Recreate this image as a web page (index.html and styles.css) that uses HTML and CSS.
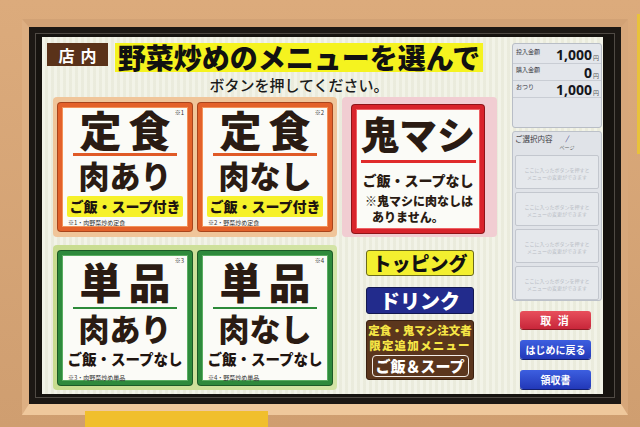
FILE: index.html
```html
<!DOCTYPE html>
<html lang="ja">
<head>
<meta charset="utf-8">
<title>券売機</title>
<link rel="stylesheet" href="styles.css">
</head>
<body>
<div class="wall">
  <div class="frame">
    <div class="bezel">
      <div class="bezel-in">
        <div class="screen">
          <div class="main">
            <div class="header">
              <div class="tag">店内</div>
              <div class="title">野菜炒めのメニューを選んで</div>
            </div>
            <div class="subtitle">ボタンを押してください。</div>
            <div class="grid">
              <div class="group g-orange">
                <div class="card c-orange">
                  <span class="note">※1</span>
                  <div class="big"><span>定</span><span>食</span></div>
                  <div class="rule"></div>
                  <div class="mid">肉あり</div>
                  <div class="sub hl">ご飯・スープ付き</div>
                  <div class="tiny">※1・肉野菜炒め定食</div>
                </div>
                <div class="card c-orange">
                  <span class="note">※2</span>
                  <div class="big"><span>定</span><span>食</span></div>
                  <div class="rule"></div>
                  <div class="mid">肉なし</div>
                  <div class="sub hl">ご飯・スープ付き</div>
                  <div class="tiny">※2・野菜炒め定食</div>
                </div>
              </div>
              <div class="group g-pink">
                <div class="card c-red">
                  <div class="oni">鬼マシ</div>
                  <div class="rule"></div>
                  <div class="oni-sub">ご飯・スープなし</div>
                  <div class="oni-note">※鬼マシに肉なしは</div>
                  <div class="oni-note second">ありません。</div>
                </div>
              </div>
              <div class="group g-green">
                <div class="card c-green">
                  <span class="note">※3</span>
                  <div class="big"><span>単</span><span>品</span></div>
                  <div class="rule"></div>
                  <div class="mid">肉あり</div>
                  <div class="sub">ご飯・スープなし</div>
                  <div class="tiny">※3・肉野菜炒め単品</div>
                </div>
                <div class="card c-green">
                  <span class="note">※4</span>
                  <div class="big"><span>単</span><span>品</span></div>
                  <div class="rule"></div>
                  <div class="mid">肉なし</div>
                  <div class="sub">ご飯・スープなし</div>
                  <div class="tiny">※4・野菜炒め単品</div>
                </div>
              </div>
              <div class="g-btns">
                <div class="btn-topping">トッピング</div>
                <div class="btn-drink">ドリンク</div>
                <div class="btn-extra">
                  <div class="extra-line">定食・鬼マシ注文者</div>
                  <div class="extra-line wide">限定追加メニュー</div>
                  <div class="extra-btn">ご飯＆スープ</div>
                </div>
              </div>
            </div>
          </div>
          <div class="side">
            <div class="amounts">
              <div class="arow"><span class="alabel">投入金額</span><span class="aval">1,000<small>円</small></span></div>
              <div class="arow"><span class="alabel">購入金額</span><span class="aval">0<small>円</small></span></div>
              <div class="arow"><span class="alabel">おつり</span><span class="aval">1,000<small>円</small></span></div>
            </div>
            <div class="select">
              <div class="select-head">
                <span class="select-title">ご選択内容</span>
                <span class="pager"><span class="slash">/</span><span class="page">ページ</span></span>
              </div>
              <div class="slots">
                <div class="slot">ここに入ったボタンを押すと<br>メニューの変更ができます</div>
                <div class="slot">ここに入ったボタンを押すと<br>メニューの変更ができます</div>
                <div class="slot">ここに入ったボタンを押すと<br>メニューの変更ができます</div>
                <div class="slot">ここに入ったボタンを押すと<br>メニューの変更ができます</div>
              </div>
            </div>
            <div class="sbtn red">取 消</div>
            <div class="sbtn blue">はじめに戻る</div>
            <div class="sbtn blue">領収書</div>
          </div>
        </div>
      </div>
    </div>
  </div>
  <div class="paper"></div>
  <div class="edge"></div>
</div>
</body>
</html>
```

FILE: styles.css
```css
html, body {
  margin: 0;
  padding: 0;
}
body {
  width: 640px;
  height: 427px;
  overflow: hidden;
  font-family: "Noto Sans CJK JP", "Noto Sans", sans-serif;
}
.wall {
  position: relative;
  width: 640px;
  height: 427px;
  box-sizing: border-box;
  padding: 19px 12px 12px 22px;
  background: linear-gradient(#dcab7c, #cf9e70);
}
.frame {
  border-style: solid;
  border-width: 8px 7px 11px 7px;
  border-color: #d2a275 #d7a77a #efc89c #ddaf82;
}
.bezel {
  background: #1c1814;
  padding: 6px;
}
.bezel-in {
  border: 1px solid #4f4a44;
  padding: 3px 11px 3px 6px;
  background: #16130f;
}
.screen {
  width: 561px;
  height: 357px;
  display: flex;
  overflow: hidden;
  background-color: #eeefe0;
  background-image: repeating-linear-gradient(90deg, rgba(255,255,255,0.25) 0 3px, rgba(0,0,0,0.015) 3px 6px);
}

/* main area */
.main {
  width: 455px;
  padding: 6px 0 0 5px;
  box-sizing: border-box;
}
.header {
  display: flex;
  gap: 7px;
  align-items: flex-start;
  height: 29px;
}
.tag {
  width: 61px;
  height: 23px;
  box-sizing: border-box;
  padding-left: 6px;
  background: #5a3219;
  color: #fff;
  font-size: 16px;
  font-weight: 700;
  letter-spacing: 6px;
  display: flex;
  align-items: center;
  justify-content: center;
}
.title {
  width: 368px;
  height: 29px;
  background: #f5f31f;
  color: #111;
  font-size: 28px;
  font-weight: 900;
  line-height: 29px;
  text-align: center;
  white-space: nowrap;
}
.subtitle {
  margin: 4px 0 0 68px;
  width: 368px;
  height: 17px;
  text-align: center;
  font-size: 15px;
  line-height: 17px;
  color: #1a1a1a;
  font-weight: 500;
}
.grid {
  margin: 4px 0 0 6px;
  display: grid;
  grid-template-columns: 284px 155px;
  grid-template-rows: 140px 145px;
  column-gap: 5px;
  row-gap: 8px;
}
.group {
  border-radius: 4px;
  display: flex;
  box-sizing: border-box;
}
.g-orange {
  background: #f0c59a;
  padding: 6px 5px;
  gap: 6px;
}
.g-pink {
  background: #f1cdd2;
  padding: 8px 13px 4px 10px;
}
.g-green {
  background: linear-gradient(90deg, #c8dc8f, #d3e4a6);
  padding: 6px 5px 5px;
  gap: 6px;
}

/* cards */
.card {
  position: relative;
  width: 134px;
  box-sizing: border-box;
  border: 4px solid;
  border-radius: 3px;
  background: #fbfbf7;
  display: flex;
  flex-direction: column;
  align-items: center;
  color: #2a1b13;
}
.c-orange {
  border-color: #e3612a;
  box-shadow: 0 0 0 1px #a8441c, inset 0 0 0 1px #f2935a;
}
.c-green {
  border-color: #2e8a3c;
  box-shadow: 0 0 0 1px #1c5a27, inset 0 0 0 1px #5aad62;
}
.c-red {
  width: 132px;
  border-color: #d8232b;
  box-shadow: 0 0 0 1px #8e1418, inset 0 0 0 1px #ee6064;
}
.note {
  position: absolute;
  top: 2px;
  right: 4px;
  font-size: 6px;
  line-height: 7px;
  color: #333;
}
.big {
  display: flex;
  gap: 7px;
  font-size: 42px;
  line-height: 44px;
  font-weight: 900;
  white-space: nowrap;
}
.c-green .big {
  margin-top: 4px;
}
.rule {
  margin-top: 2px;
  width: 104px;
  height: 3px;
  background: #e05a26;
}
.c-green .rule {
  margin-top: 4px;
  background: #2c8a3a;
}
.c-red .rule {
  margin-top: 5px;
  width: 115px;
  background: #e02b2b;
}
.mid {
  margin-top: 2px;
  font-size: 31px;
  line-height: 34px;
  font-weight: 900;
  white-space: nowrap;
}
.sub {
  margin-top: 4px;
  height: 21px;
  padding: 0 2px;
  font-size: 14px;
  line-height: 21px;
  font-weight: 900;
  white-space: nowrap;
  color: #1e1410;
}
.c-green .sub {
  margin-top: 3px;
  height: 22px;
  line-height: 22px;
  font-size: 14.5px;
}
.hl {
  width: 116px;
  box-sizing: border-box;
  text-align: center;
  background: #f6f12a;
  border-radius: 2px;
}
.tiny {
  align-self: flex-start;
  margin: 2px 0 0 6px;
  font-size: 6px;
  line-height: 7px;
  color: #333;
  white-space: nowrap;
}
.c-green .tiny {
  margin-top: 4px;
}
.oni {
  margin-top: 2px;
  font-size: 38px;
  line-height: 44px;
  font-weight: 900;
  white-space: nowrap;
}
.oni-sub {
  margin-top: 7px;
  font-size: 14px;
  line-height: 20px;
  font-weight: 900;
  white-space: nowrap;
}
.oni-note {
  align-self: flex-start;
  margin-top: 3px;
  padding-left: 9px;
  font-size: 12px;
  line-height: 16px;
  font-weight: 900;
  white-space: nowrap;
}
.oni-note.second {
  margin-top: 0;
  padding-left: 16px;
}

/* right buttons in grid */
.g-btns {
  display: flex;
  flex-direction: column;
  padding: 5px 0 0 24px;
}
.btn-topping, .btn-drink, .btn-extra {
  width: 108px;
  box-sizing: border-box;
  border-radius: 3px;
}
.btn-topping {
  height: 26px;
  background: #f3ef2f;
  border: 1px solid #6b6a1c;
  color: #111;
  font-size: 19px;
  font-weight: 900;
  line-height: 24px;
  text-align: center;
  white-space: nowrap;
}
.btn-drink {
  margin-top: 11px;
  height: 27px;
  background: #222b8c;
  border: 1px solid #121850;
  color: #fff;
  font-size: 20px;
  font-weight: 900;
  line-height: 25px;
  text-align: center;
  white-space: nowrap;
}
.btn-extra {
  margin-top: 6px;
  height: 60px;
  background: #5b361d;
  border: 1px solid #3a2010;
  display: flex;
  flex-direction: column;
  align-items: center;
  padding-top: 2px;
}
.extra-line {
  color: #f6e545;
  font-size: 11.5px;
  font-weight: 900;
  line-height: 15px;
  white-space: nowrap;
}
.extra-line.wide {
  letter-spacing: 1.2px;
}
.extra-btn {
  margin-top: 2px;
  width: 97px;
  height: 22px;
  box-sizing: border-box;
  border: 1.5px solid #f2ece6;
  border-radius: 4px;
  color: #fff;
  font-size: 15px;
  font-weight: 900;
  line-height: 19px;
  text-align: center;
  white-space: nowrap;
}

/* side panel */
.side {
  width: 90px;
  margin-left: auto;
  margin-right: 1px;
  padding-top: 6px;
  display: flex;
  flex-direction: column;
}
.amounts {
  height: 85px;
  box-sizing: border-box;
  background: #e3e6eb;
  border: 1px solid #b8bdc6;
  border-radius: 3px;
  padding-top: 2px;
}
.arow {
  height: 17px;
  box-sizing: border-box;
  border-bottom: 1px solid #c9cdd4;
  display: flex;
  justify-content: space-between;
  align-items: flex-start;
  padding: 0 2px 0 3px;
}
.arow:first-child {
  height: 18px;
}
.alabel {
  font-size: 6px;
  line-height: 8px;
  padding-top: 2px;
  color: #3a3a44;
}
.aval {
  font-size: 14px;
  font-weight: 700;
  line-height: 14px;
  padding-top: 2px;
  color: #16161c;
  font-family: "Noto Sans", "Noto Sans CJK JP", sans-serif;
}
.aval small {
  font-size: 6px;
  font-weight: 400;
  color: #555;
  margin-left: 1px;
  font-family: "Noto Sans CJK JP", sans-serif;
}
.select {
  margin-top: 3px;
  height: 170px;
  box-sizing: border-box;
  background: #e0e3e8;
  border: 1px solid #bcc1c9;
  border-radius: 3px;
  padding: 0 2px;
}
.select-head {
  height: 23px;
  display: flex;
  align-items: flex-start;
}
.select-title {
  font-size: 7.5px;
  line-height: 9px;
  padding-top: 2px;
  color: #3c3c44;
  white-space: nowrap;
}
.pager {
  margin-left: 7px;
  display: flex;
  flex-direction: column;
  align-items: center;
  gap: 2px;
}
.slash {
  font-size: 7px;
  line-height: 7px;
  padding-top: 3px;
  color: #2b2f7a;
  font-style: italic;
}
.page {
  font-size: 5px;
  line-height: 5px;
  color: #666;
}
.slots {
  display: flex;
  flex-direction: column;
  gap: 3px;
}
.slot {
  height: 34px;
  box-sizing: border-box;
  border: 1px solid #c3c7ce;
  border-radius: 2px;
  background: #e5e8ec;
  color: #b9bdc5;
  font-size: 5px;
  line-height: 7px;
  text-align: center;
  padding-top: 10px;
  white-space: nowrap;
}
.sbtn {
  margin: 10px 0 0 8px;
  width: 71px;
  height: 19px;
  box-sizing: border-box;
  border-radius: 3px;
  color: #fff;
  font-size: 10px;
  font-weight: 700;
  line-height: 19px;
  text-align: center;
  white-space: nowrap;
}
.sbtn.red {
  height: 18px;
  line-height: 18px;
  font-size: 11px;
  letter-spacing: 2px;
  background: linear-gradient(#e8505c, #c8263a);
  box-shadow: 0 1px 0 #8a1a24;
}
.sbtn.blue {
  margin-top: 11px;
  background: linear-gradient(#3d5fe0, #2238b8);
  box-shadow: 0 1px 0 #142070;
}

/* overlays in the photo */
.paper {
  position: absolute;
  left: 85px;
  top: 411px;
  width: 183px;
  height: 16px;
  background: #f0bf2c;
}
.edge {
  position: absolute;
  right: 0;
  top: 14px;
  width: 3px;
  height: 140px;
  background: #e9c23a;
}
```
